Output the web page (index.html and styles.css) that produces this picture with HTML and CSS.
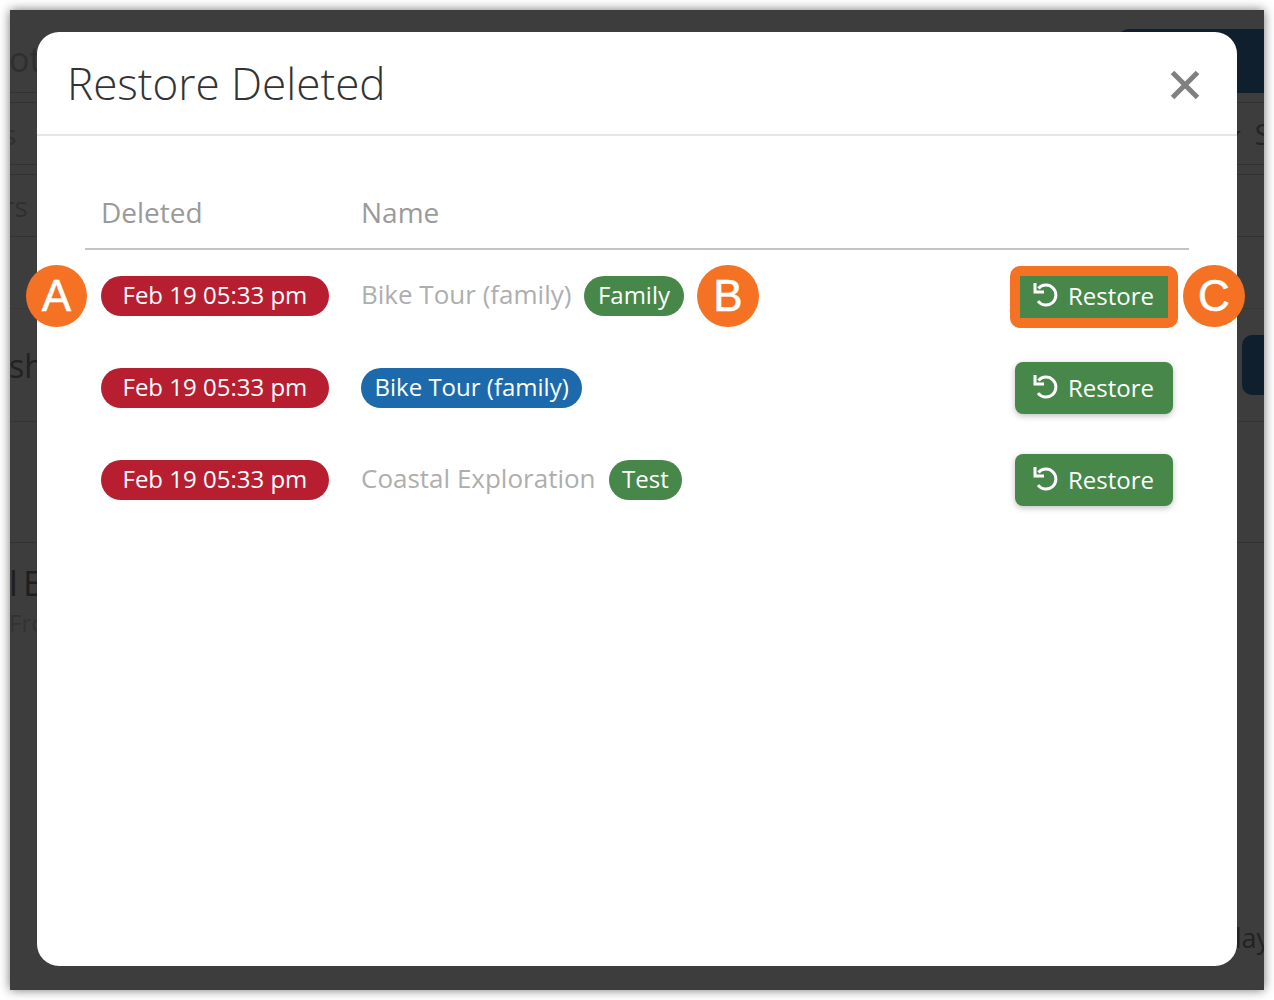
FILE: index.html
```html
<!DOCTYPE html>
<html lang="en">
<head>
<meta charset="utf-8">
<title>Restore Deleted</title>
<link rel="stylesheet" href="styles.css">
</head>
<body>
<div class="window">
  <div class="backdrop">
    <div class="bg-row bg-top"><span class="bg-left bg-title">ott</span><span class="bg-navy"></span></div>
    <div class="bg-row bg-tabs"><span class="bg-left bg-tail">s</span><span class="bg-right"><span class="bg-caret"></span><span class="bg-sort">S</span></span></div>
    <div class="bg-row bg-filter"><span class="bg-left bg-tail">rs</span></div>
    <div class="bg-row bg-gap"></div>
    <div class="bg-row bg-section"><span class="bg-left bg-big">sh</span><span class="bg-btn"></span></div>
    <div class="bg-row bg-empty"></div>
    <div class="bg-row bg-item">
      <div class="bg-stack"><span class="bg-left bg-head">l E</span><span class="bg-left bg-sub">Fro</span></div>
      <span class="bg-day">lay</span>
    </div>
  </div>
  <section class="modal">
    <header class="modal-head">
      <h1 class="modal-title">Restore Deleted</h1>
      <svg class="close" width="30" height="30" viewBox="0 0 30 30"><path d="M2.5 2.5 L27.5 27.5 M27.5 2.5 L2.5 27.5" fill="none" stroke="#808080" stroke-width="5"/></svg>
    </header>
    <div class="modal-body">
      <div class="cols cols-head">
        <div class="col-date">Deleted</div>
        <div class="col-name">Name</div>
      </div>
      <div class="cols row">
        <div class="col-date"><span class="pill pill-red">Feb 19 05:33 pm</span></div>
        <div class="col-name"><span class="item-name">Bike Tour (family)</span><span class="pill pill-green">Family</span></div>
        <button class="restore restore-marked"><svg class="undo" width="26" height="26" viewBox="0 0 26 26"><path d="M5.4 6.4 A10 10 0 1 1 5 19.2" fill="none" stroke="#fff" stroke-width="3"/><path d="M2 1 V10 H11" fill="none" stroke="#fff" stroke-width="3"/></svg><span>Restore</span></button>
      </div>
      <div class="cols row">
        <div class="col-date"><span class="pill pill-red">Feb 19 05:33 pm</span></div>
        <div class="col-name"><span class="pill pill-blue">Bike Tour (family)</span></div>
        <button class="restore"><svg class="undo" width="26" height="26" viewBox="0 0 26 26"><path d="M5.4 6.4 A10 10 0 1 1 5 19.2" fill="none" stroke="#fff" stroke-width="3"/><path d="M2 1 V10 H11" fill="none" stroke="#fff" stroke-width="3"/></svg><span>Restore</span></button>
      </div>
      <div class="cols row">
        <div class="col-date"><span class="pill pill-red">Feb 19 05:33 pm</span></div>
        <div class="col-name"><span class="item-name">Coastal Exploration</span><span class="pill pill-green">Test</span></div>
        <button class="restore"><svg class="undo" width="26" height="26" viewBox="0 0 26 26"><path d="M5.4 6.4 A10 10 0 1 1 5 19.2" fill="none" stroke="#fff" stroke-width="3"/><path d="M2 1 V10 H11" fill="none" stroke="#fff" stroke-width="3"/></svg><span>Restore</span></button>
      </div>
    </div>
  </section>
  <span class="callout callout-a">A</span>
  <span class="callout callout-b">B</span>
  <span class="callout callout-c">C</span>
</div>
</body>
</html>
```
FILE: styles.css
```css
* { box-sizing: border-box; }
html, body { margin: 0; padding: 0; background: #fff; }
body { width: 1274px; height: 1000px; padding: 10px; font-family: "Open Sans", sans-serif; overflow: hidden; }
.window { position: relative; width: 1254px; height: 980px; background: #3d3d3d; box-shadow: 0 0 10px rgba(0,0,0,.55); overflow: hidden; }

.backdrop { display: flex; flex-direction: column; height: 100%; color: #2f2f2f; }
.bg-row { display: flex; justify-content: space-between; align-items: center; flex: none; border-bottom: 1px solid #323232; font-size: 28px; white-space: nowrap; }
.bg-left { margin-left: -1px; }
.bg-tail { margin-left: -7px; }
.bg-top { height: 83px; padding-top: 16px; }
.bg-title { font-size: 34px; }
.bg-navy { align-self: flex-end; width: 147px; height: 64px; margin-bottom: -1px; background: #0f1f2e; border-radius: 12px 0 0 0; }
.bg-tabs { height: 63px; margin-top: 9px; border-top: 1px solid #323232; }
.bg-right { display: flex; align-items: center; }
.bg-caret { width: 0; height: 0; border-top: 6px solid #222; border-left: 6px solid transparent; border-right: 6px solid transparent; margin-right: 14px; }
.bg-sort { font-size: 30px; color: #252525; margin-right: -7px; }
.bg-filter { height: 63px; margin-top: 9px; border-top: 1px solid #323232; }
.bg-gap { height: 72px; border-bottom-color: #383838; }
.bg-section { height: 113px; border-bottom-color: #343434; }
.bg-big { font-size: 32px; color: #222; }
.bg-btn { width: 22px; height: 60px; background: #0f1f2e; border-radius: 10px 0 0 10px; }
.bg-empty { height: 121px; }
.bg-item { flex: 1; border: 0; align-items: flex-start; }
.bg-stack { display: flex; flex-direction: column; padding-top: 19px; }
.bg-head { font-size: 35px; line-height: 42px; word-spacing: -4px; color: #1f1f1f; }
.bg-sub { font-size: 24px; line-height: 30px; margin-top: 4px; color: #333; }
.bg-day { align-self: flex-end; margin-bottom: 35px; margin-right: -6px; font-size: 27px; line-height: 34px; color: #222; }

.modal { position: absolute; left: 27px; top: 22px; width: 1200px; height: 934px; background: #fff; border-radius: 22px; }
.modal-head { display: flex; justify-content: space-between; align-items: center; height: 104px; padding: 0 37px 0 30px; border-bottom: 2px solid #e6e6e6; }
.modal-title { margin: 0; font-size: 44px; font-weight: 300; color: #333; line-height: 1; }
.close { display: block; margin-top: 4px; }
.modal-body { padding: 52px 48px 0; }
.cols { display: flex; align-items: center; }
.cols-head { height: 62px; padding-bottom: 12px; border-bottom: 2px solid #c4c4c4; font-size: 28px; color: #9a9a9a; }
.col-date { width: 276px; padding-left: 16px; flex: none; }
.col-name { flex: 1; display: flex; align-items: center; gap: 13px; }
.row { height: 92px; padding-right: 16px; }
.pill { display: inline-block; height: 40px; line-height: 38px; padding: 0 13.5px; border-radius: 20px; font-size: 24px; color: #fff; white-space: nowrap; }
.pill-red { background: #b71f31; padding: 0 21.5px; }
.pill-green { background: #47874a; }
.pill-blue { background: #1c6aab; }
.item-name { font-size: 26px; line-height: 36px; padding-bottom: 5px; color: #aeaeae; white-space: nowrap; }
.restore { display: flex; align-items: center; justify-content: center; gap: 9px; width: 158px; height: 52px; padding: 0 0 2px; border: 0; border-radius: 8px; background: #47874a; color: #fff; font: 24px "Open Sans", sans-serif; box-shadow: 0 2px 6px rgba(0,0,0,.25); }
.restore-marked { width: 168px; height: 62px; margin: 2px -5px 0; padding-bottom: 4px; border: 10px solid #f57224; border-radius: 10px; background-clip: padding-box; box-shadow: none; }
.undo { flex: none; margin-left: -1px; }
.callout { position: absolute; top: 255px; width: 62px; height: 62px; border-radius: 50%; background: #f57224; color: #fff; font-family: "Liberation Sans", sans-serif; font-size: 44px; line-height: 62px; text-align: center; -webkit-text-stroke: .6px #fff; }
.callout-a { left: 16px; width: 61px; }
.callout-b { left: 687px; }
.callout-c { left: 1173px; }
```
